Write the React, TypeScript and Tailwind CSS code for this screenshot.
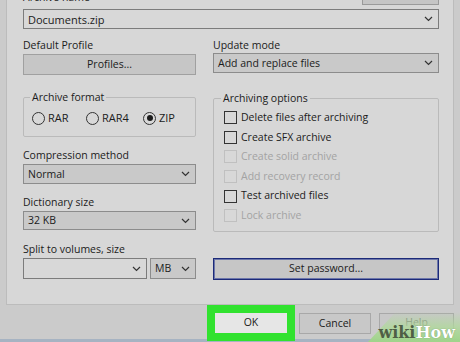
import React from 'react';

const font = "font-['Open_Sans','Noto_Sans',sans-serif] text-[10.5px] text-[#1b1b1b]";

const Chevron = () => (
  <svg width="9" height="6" viewBox="0 0 9 6" className="shrink-0">
    <path d="M1 1 L4.5 4.5 L8 1" fill="none" stroke="#333" strokeWidth="1.2" />
  </svg>
);

const Combo = ({ text, className, dark = false }: { text?: string; className: string; dark?: boolean }) => (
  <div
    className={`flex items-center justify-between border pl-[4px] pr-[5px] ${
      dark ? 'bg-[#c9c9c9] border-[#8c8c8c]' : 'bg-[#d8d8d8] border-[#7c7c7c]'
    } ${className}`}
  >
    <span className="leading-none">{text}</span>
    <Chevron />
  </div>
);

const Label = ({ children, className = '' }: { children: React.ReactNode; className?: string }) => (
  <div className={`h-[15px] leading-[15px] ${className}`}>{children}</div>
);

const Radio = ({ label, checked = false, className = '' }: { label: string; checked?: boolean; className?: string }) => (
  <div className={`flex items-center gap-[3px] ${className}`}>
    <span className="flex h-[13px] w-[13px] items-center justify-center rounded-full border border-[#333] bg-[#d8d8d8]">
      {checked && <span className="h-[6px] w-[6px] rounded-full bg-[#1b1b1b]" />}
    </span>
    <span className="text-[11px]">{label}</span>
  </div>
);

const Check = ({ label, disabled = false }: { label: string; disabled?: boolean }) => (
  <div className={`flex h-[19.6px] items-center gap-[4px] ${disabled ? 'text-[#a3a3a3]' : ''}`}>
    <span className={`h-[13px] w-[13px] border bg-[#d8d8d8] ${disabled ? 'border-[#c0c0c0]' : 'border-[#333]'}`} />
    <span>{label}</span>
  </div>
);

export default function App() {
  return (
    <div className={`relative flex h-[342px] w-[460px] flex-col overflow-hidden bg-[#cbcbcb] ${font}`}>
      {/* tab panel */}
      <div className="ml-[6px] h-[305px] w-[448px] shrink-0 border-x border-b border-[#bcbcbc] bg-[#d7d7d7] pl-[16px]">
        <div className="-mt-[10px] flex h-[15px] w-[416px] items-end justify-between">
          <span className="leading-[15px]">Archive name</span>
          <div className="h-[20px] w-[77px] border border-[#9a9a9a] bg-[#c5c5c5]" />
        </div>
        <Combo text="Documents.zip" className="mt-[4px] h-[20px] w-[416px] text-[11px]" />

        <div className="mt-[9px] flex gap-[17px]">
          {/* left column */}
          <div className="flex w-[173px] flex-col">
            <Label>Default Profile</Label>
            <div className="mt-[1px] flex h-[21px] items-center justify-center border border-[#a0a0a0] bg-[#c6c6c6]">
              Profiles...
            </div>
            <fieldset className="mt-[15px] h-[47px] rounded-[2px] border border-[#bababa] pl-[8px]">
              <legend className="ml-[-2px] px-[2px] leading-[14px]">Archive format</legend>
              <div className="mt-[6px] flex items-center">
                <Radio label="RAR" className="w-[54px]" />
                <Radio label="RAR4" className="w-[57px]" />
                <Radio label="ZIP" checked />
              </div>
            </fieldset>
            <Label className="mt-[11px]">Compression method</Label>
            <Combo text="Normal" dark className="mt-[1px] h-[20px]" />
            <Label className="mt-[11px]">Dictionary size</Label>
            <Combo text="32 KB" dark className="mt-[1px] h-[19px]" />
            <Label className="mt-[12px]">Split to volumes, size</Label>
            <div className="mt-[1px] flex gap-[3px]">
              <Combo className="h-[21px] w-[124px]" />
              <Combo text="MB" dark className="h-[21px] w-[46px]" />
            </div>
          </div>

          {/* right column */}
          <div className="flex w-[226px] flex-col">
            <Label>Update mode</Label>
            <Combo text="Add and replace files" dark className="h-[20px]" />
            <fieldset className="mt-[18px] h-[141px] rounded-[2px] border border-[#bababa] pl-[10px]">
              <legend className="ml-[-3px] px-[2px] leading-[14px]">Archiving options</legend>
              <div className="mt-[3px] flex flex-col">
                <Check label="Delete files after archiving" />
                <Check label="Create SFX archive" />
                <Check label="Create solid archive" disabled />
                <Check label="Add recovery record" disabled />
                <Check label="Test archived files" />
                <Check label="Lock archive" disabled />
              </div>
            </fieldset>
            <div className="mt-[26px] flex h-[22px] items-center justify-center border border-[#1c2a78] bg-[#c6c6c6] shadow-[inset_0_0_0_1px_#6c76aa]">
              Set password...
            </div>
          </div>
        </div>
      </div>

      {/* dialog buttons */}
      <div className="flex h-[37px] items-start border-b-[3px] border-[#a6b3c2] pl-[207px]">
        <div className="border-[8px] border-[#31e22f]">
          <div className="flex h-[20px] w-[72px] items-center justify-center bg-[#e6e6e6]">OK</div>
        </div>
        <div className="ml-[4px] mt-[8px] flex h-[21px] w-[72px] items-center justify-center border border-[#a8a8a8] bg-[#c8c8c8]">
          Cancel
        </div>
        <div className="ml-[8px] mt-[8px] flex h-[21px] w-[75px] items-start justify-center border border-[#a8a8a8] bg-[#c8c8c8] pt-[1px] text-[#7a7a7a]">
          Help
        </div>
      </div>

      {/* wikiHow watermark */}
      <div className="pointer-events-none absolute bottom-0 right-0 h-[30px] w-[92px] bg-gradient-to-t from-[#9fd48a] via-[#b0d99c]/80 to-[#c4dcb8]/0 [clip-path:polygon(30%_0,100%_0,100%_100%,0_100%)]" />
      <div className="pointer-events-none absolute bottom-[1px] right-[5px] flex font-['DejaVu_Serif','Liberation_Serif',serif] text-[16px] font-bold leading-none">
        <span className="text-[#4f5f45]">wiki</span>
        <span className="text-white [text-shadow:0_0_1px_#6a8a5a]">How</span>
      </div>
    </div>
  );
}
